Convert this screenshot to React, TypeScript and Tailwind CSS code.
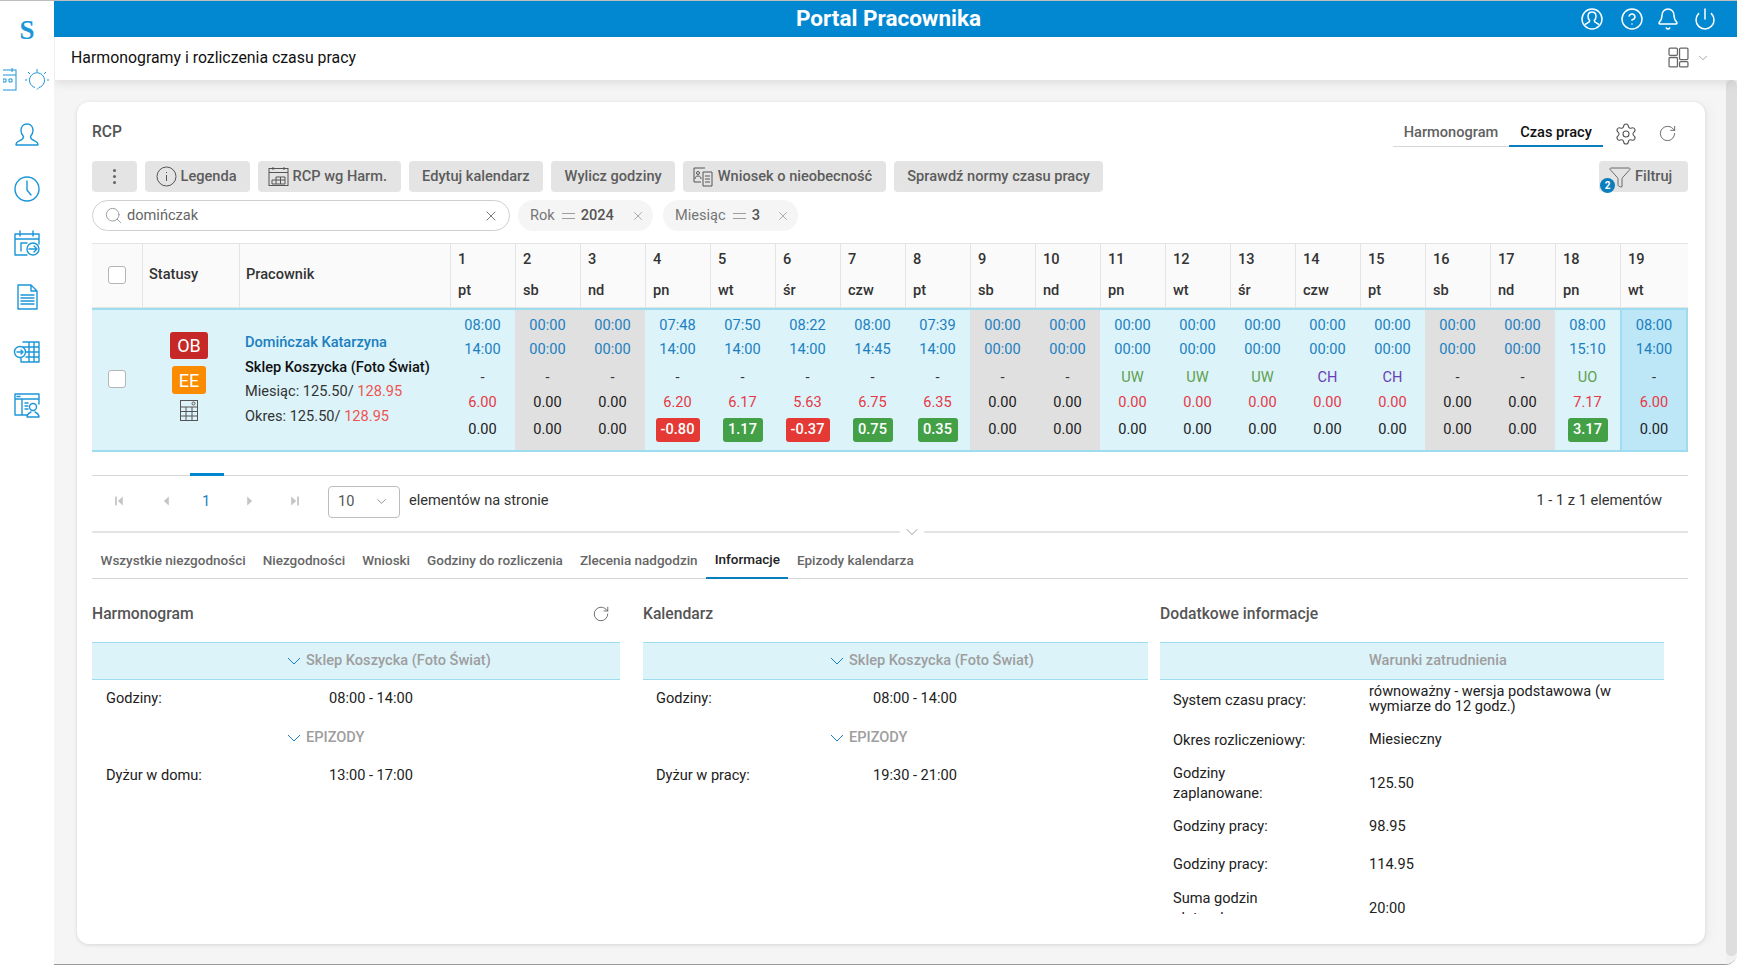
import { Bell, ChevronDown, CircleHelp, Filter, Power, RotateCw, Search, Settings, X } from "lucide-react";

const days = [
  { n: 1, d: "pt", a: "08:00", b: "14:00", c: "-", v: "6.00", r: "0.00", late: true },
  { n: 2, d: "sb", a: "00:00", b: "00:00", c: "-", v: "0.00", r: "0.00", off: true },
  { n: 3, d: "nd", a: "00:00", b: "00:00", c: "-", v: "0.00", r: "0.00", off: true },
  { n: 4, d: "pn", a: "07:48", b: "14:00", c: "-", v: "6.20", r: "-0.80", badge: "red" },
  { n: 5, d: "wt", a: "07:50", b: "14:00", c: "-", v: "6.17", r: "1.17", badge: "green" },
  { n: 6, d: "śr", a: "08:22", b: "14:00", c: "-", v: "5.63", r: "-0.37", badge: "red" },
  { n: 7, d: "czw", a: "08:00", b: "14:45", c: "-", v: "6.75", r: "0.75", badge: "green" },
  { n: 8, d: "pt", a: "07:39", b: "14:00", c: "-", v: "6.35", r: "0.35", badge: "green" },
  { n: 9, d: "sb", a: "00:00", b: "00:00", c: "-", v: "0.00", r: "0.00", off: true },
  { n: 10, d: "nd", a: "00:00", b: "00:00", c: "-", v: "0.00", r: "0.00", off: true },
  { n: 11, d: "pn", a: "00:00", b: "00:00", c: "UW", v: "0.00", r: "0.00" },
  { n: 12, d: "wt", a: "00:00", b: "00:00", c: "UW", v: "0.00", r: "0.00" },
  { n: 13, d: "śr", a: "00:00", b: "00:00", c: "UW", v: "0.00", r: "0.00" },
  { n: 14, d: "czw", a: "00:00", b: "00:00", c: "CH", v: "0.00", r: "0.00" },
  { n: 15, d: "pt", a: "00:00", b: "00:00", c: "CH", v: "0.00", r: "0.00" },
  { n: 16, d: "sb", a: "00:00", b: "00:00", c: "-", v: "0.00", r: "0.00", off: true },
  { n: 17, d: "nd", a: "00:00", b: "00:00", c: "-", v: "0.00", r: "0.00", off: true },
  { n: 18, d: "pn", a: "08:00", b: "15:10", c: "UO", v: "7.17", r: "3.17", badge: "green" },
  { n: 19, d: "wt", a: "08:00", b: "14:00", c: "-", v: "6.00", r: "0.00", selected: true },
];

const tabs = ["Wszystkie niezgodności", "Niezgodności", "Wnioski", "Godziny do rozliczenia", "Zlecenia nadgodzin", "Informacje", "Epizody kalendarza"];

function Checkbox() {
  return <span className="block w-[18px] h-[18px] rounded-[3px] border border-[#b5b5b5] bg-white" />;
}

function SideIcon({ children }: { children: React.ReactNode }) {
  return (
    <svg width="28" height="28" viewBox="0 0 28 28" fill="none" stroke="#1b96d8" strokeWidth="1.4" strokeLinejoin="round" strokeLinecap="round">
      {children}
    </svg>
  );
}

function SmallBtn({ children }: { children: React.ReactNode }) {
  return (
    <button className="h-[31px] px-[13.500px] flex items-center gap-[4px] rounded-[4px] bg-[#e4e4e4] font-medium text-[#5c5c5c] whitespace-nowrap">
      {children}
    </button>
  );
}

function PagerIcon({ dir, bar }: { dir: "l" | "r"; bar?: boolean }) {
  return (
    <svg width="11" height="12" viewBox="0 0 10 10" fill="#c4c4c4">
      {dir === "l" ? <path d="M8 1v8L3.500 5z" /> : <path d="M2 1v8l4.500-4z" />}
      {bar && (dir === "l" ? <rect x="1" y="1" width="1.600" height="8" /> : <rect x="7.400" y="1" width="1.600" height="8" />)}
    </svg>
  );
}

function Chev() {
  return (
    <svg width="14" height="8" viewBox="0 0 14 8" fill="none" stroke="#1b7fc0" strokeWidth="1">
      <path d="M1 1l6 6 6-6" />
    </svg>
  );
}

function Eq() {
  return <span className="ml-[7px] mr-[6px] w-[13px] h-[6px] border-y border-[#9e9e9e]" />;
}

function Bar({ title, pad, chevron = true }: { title: string; pad: string; chevron?: boolean }) {
  return (
    <div className={"h-[38px] flex items-center gap-[5px] border-y border-[#9edcf0] bg-[#dcf3fa] font-medium text-[#9e9e9e] " + pad}>
      {chevron && <Chev />}
      {title}
    </div>
  );
}

function Epizody({ pad }: { pad: string }) {
  return (
    <div className={"h-[38px] flex items-center gap-[5px] font-medium text-[#9e9e9e] mt-[2px] " + pad}>
      <Chev />
      EPIZODY
    </div>
  );
}

function InfoRow({ label, value, h, labelPad = "" }: { label: React.ReactNode; value: React.ReactNode; h: string; labelPad?: string }) {
  return (
    <div className={"flex items-center shrink-0 pl-[13px] " + h}>
      <div className={"w-[196px] pr-[60px] leading-[20px] " + labelPad}>{label}</div>
      <div className="flex-1 leading-[15px] pr-[40px]">{value}</div>
    </div>
  );
}

export default function App() {
  return (
    <div className="h-screen w-screen overflow-hidden flex bg-white border-t border-[#bdbdbd] font-['Roboto',sans-serif] text-[14.6px] text-[#212121]">
      {/* sidebar */}
      <aside className="w-[54px] shrink-0 flex flex-col items-center bg-white">
        <div className="h-[59px] flex items-center font-['Liberation_Serif',serif] font-bold text-[27px] text-[#1b96d8]">S</div>
        <div className="w-full h-[40px] flex items-center text-[#1b96d8]">
          <div className="ml-[3px] w-[14px] h-[26px] overflow-hidden flex justify-end shrink-0">
            <svg className="shrink-0" width="20" height="26" viewBox="0 0 20 26" fill="none" stroke="currentColor" strokeWidth="1">
              <rect x="1" y="3" width="18" height="20" />
              <path d="M1 8h18M5 1v4M15 1v4" />
              <path d="M6 12h3v3H6zM12 12h3v3h-3z" />
            </svg>
          </div>
          <svg className="ml-[7px] shrink-0" width="26" height="26" viewBox="0 0 26 26" fill="none" stroke="currentColor" strokeWidth="1">
            <path d="M11 20.500a7.500 7.500 0 1 1 4 0l-2 2" />
            <path d="M13 2v3M4 5l2 2M22 5l-2 2M1 13h2M23 13h2" />
          </svg>
        </div>
        <div className="flex flex-col items-center gap-[26px] mt-[21px]">
          <SideIcon>
            <path d="M14 3c-4 0-6 3-6 6.500 0 2.500 1 4.500 2.500 6 0 2-1 3-3.500 4-2 .8-4 1.500-4 4.500h22c0-3-2-3.700-4-4.500-2.500-1-3.500-2-3.500-4 1.500-1.500 2.500-3.500 2.500-6C20 6 18 3 14 3z" />
          </SideIcon>
          <SideIcon>
            <circle cx="14" cy="14" r="12" />
            <path d="M14 6v9l4 5" />
          </SideIcon>
          <SideIcon>
            <path d="M26 15V5H2v21h12M2 10h24M7 2v5M20 2v5M8 22v-8h6" />
            <circle cx="20" cy="20" r="6" />
            <path d="M16 20h8M21 17l3 3-3 3" />
          </SideIcon>
          <SideIcon>
            <path d="M5 2h13l6 6v18H5zM18 2v6h6M8 12h13M8 15h13M8 18h13M8 21h13" />
          </SideIcon>
          <SideIcon>
            <path d="M10 5h16v20H8v-4M10 10h16M13 15h13M13 20h13M16 5v20M21 5v20" />
            <circle cx="7" cy="15" r="5.500" />
            <path d="M4 15h6M8 13l2 2-2 2" />
          </SideIcon>
          <SideIcon>
            <path d="M14 24H2V3h24v10M2 8h24M9 8v16M4 5.500h3M12 12h3M12 15h3M12 18h3" />
            <circle cx="20" cy="16" r="3.500" />
            <path d="M14 26c0-3 2-4 4-5M26 26c0-3-2-4-4-5M14 26h12" />
          </SideIcon>
        </div>
      </aside>

      <div className="flex-1 min-w-0 flex flex-col border-b border-[#9a9a9a] rounded-br-[12px] overflow-hidden">
        {/* top bar */}
        <header className="h-[36px] shrink-0 flex items-center bg-[#0288d1] text-white">
          <div className="flex-1 pl-[143px] text-center text-[22.500px] font-bold">Portal Pracownika</div>
          <div className="flex items-center gap-[14px] pr-[20px]">
            <svg width="24" height="24" viewBox="0 0 24 24" fill="none" stroke="currentColor" strokeWidth="1.500">
              <circle cx="12" cy="12" r="10" />
              <path d="M12 5c-2.500 0-4 2-4 4.500 0 1.500.7 3 1.700 4 0 1.500-1 2-2.500 2.600L5 17.500M12 5c2.500 0 4 2 4 4.500 0 1.500-.7 3-1.700 4 0 1.500 1 2 2.500 2.600l2.200 1.400" />
            </svg>
            <CircleHelp size={24} strokeWidth={1.5} className="ml-[2px]" />
            <Bell size={24} strokeWidth={1.5} className="ml-[-2px]" />
            <Power size={24} strokeWidth={1.5} className="ml-[-1px]" />
          </div>
        </header>

        {/* page title */}
        <div className="h-[43px] pb-[2px] shrink-0 flex items-center justify-between pl-[16px] pr-[27px] bg-white border-l border-[#eeeeee] shadow-[0_3px_10px_rgba(0,0,0,0.1)] relative">
          <span className="text-[15.850px] text-[#111111]">Harmonogramy i rozliczenia czasu pracy</span>
          <div className="flex items-center gap-[7px] text-[#666666]">
            <svg width="21" height="21" viewBox="0 0 20 20" fill="none" stroke="currentColor" strokeWidth="1.200">
              <rect x="1" y="1" width="8" height="7" rx="1" />
              <rect x="1" y="10" width="8" height="9" rx="1" />
              <rect x="11" y="1" width="8" height="11" rx="1" />
              <rect x="11" y="14" width="8" height="5" rx="1" />
            </svg>
            <ChevronDown size={14} strokeWidth={1} />
          </div>
        </div>

        <div className="flex-1 min-h-0 flex bg-[#f5f5f5]">
          <div className="flex-1 min-w-0 pl-[23px] pr-[21px] pt-[22px] pb-[20px]">
            <main className="h-full flex flex-col rounded-[12px] bg-white pl-[15px] pr-[17px] shadow-[0_1px_4px_rgba(0,0,0,0.12),8px_0_8px_rgba(0,0,0,0.02)]">
              {/* title row */}
              <div className="h-[45px] shrink-0 pt-[18px] flex items-end justify-between">
                <span className="self-center pb-[2px] text-[15.600px] font-medium text-[#555555]">RCP</span>
                <div className="flex items-center">
                  <div className="flex h-[27px] font-medium">
                    <span className="w-[116px] pt-[2px] text-center border-b border-[#d8d8d8] text-[#616161]">Harmonogram</span>
                    <span className="w-[94px] pt-[2px] text-center border-b-2 border-[#0a7ebd] text-[#111111]">Czas pracy</span>
                  </div>
                  <Settings size={24} strokeWidth={1.1} className="ml-[11px] text-[#555555]" />
                  <RotateCw size={19} strokeWidth={1.1} className="ml-[20px] mr-[11px] text-[#555555]" />
                </div>
              </div>

              {/* toolbar */}
              <div className="mt-[14px] h-[31px] shrink-0 flex items-center gap-[8px]">
                <button className="h-[31px] w-[45px] flex flex-col items-center justify-center gap-[3px] rounded-[4px] bg-[#e4e4e4]">
                  <span className="w-[3px] h-[3px] rounded-full bg-[#666666]" />
                  <span className="w-[3px] h-[3px] rounded-full bg-[#666666]" />
                  <span className="w-[3px] h-[3px] rounded-full bg-[#666666]" />
                </button>
                <SmallBtn>
                  <svg className="-ml-[3px]" width="21" height="21" viewBox="0 0 21 21" fill="none" stroke="#555555" strokeWidth="1">
                    <circle cx="10.500" cy="10.500" r="9.500" />
                    <path d="M10.500 9v6M10.500 6v1" />
                  </svg>
                  Legenda
                </SmallBtn>
                <SmallBtn>
                  <svg className="-ml-[4px]" width="21" height="21" viewBox="0 0 21 21" fill="none" stroke="#555555" strokeWidth="1">
                    <rect x="1" y="2.500" width="19" height="17" />
                    <path d="M1 6.500h19M5 1v3M16 1v3M4 14h13v4H4zM8 11h9v3M8 11v7M12.500 11v7" />
                  </svg>
                  RCP wg Harm.
                </SmallBtn>
                <SmallBtn>Edytuj kalendarz</SmallBtn>
                <SmallBtn>Wylicz godziny</SmallBtn>
                <SmallBtn>
                  <svg className="-ml-[4px]" width="21" height="21" viewBox="0 0 21 21" fill="none" stroke="#555555" strokeWidth="1">
                    <path d="M12 2H1v14h7" />
                    <circle cx="5" cy="7" r="1.500" />
                    <path d="M2 13c0-2 1-3 3-3s3 1 3 3" />
                    <path d="M10 6h9v14h-9zM12 10h5M12 13h5M12 16h5" />
                  </svg>
                  Wniosek o nieobecność
                </SmallBtn>
                <SmallBtn>Sprawdź normy czasu pracy</SmallBtn>
                <div className="ml-auto relative">
                  <button className="h-[31px] w-[89px] pl-[9px] flex items-center gap-[3px] rounded-[4px] bg-[#e4e4e4] font-medium text-[#5c5c5c]">
                    <Filter size={24} strokeWidth={0.9} />
                    Filtruj
                  </button>
                  <span className="absolute left-[1px] bottom-0 translate-y-[1px] w-[15px] h-[15px] rounded-full bg-[#0a7ebd] text-white text-[10px] font-bold flex items-center justify-center">2</span>
                </div>
              </div>

              {/* filters */}
              <div className="mt-[8px] h-[31px] shrink-0 flex items-center gap-[8px]">
                <div className="w-[418px] h-[31px] flex items-center pl-[11px] pr-[10px] gap-[4px] rounded-full border border-[#cfcfcf] text-[#666666]">
                  <Search size={19} strokeWidth={1} className="text-[#888888]" />
                  <span className="flex-1">domińczak</span>
                  <X size={16} strokeWidth={1.2} className="text-[#555555]" />
                </div>
                <div className="w-[135px] h-[31px] flex items-center pl-[12px] rounded-full bg-[#f5f5f5] text-[#757575]">
                  Rok
                  <Eq />
                  <span className="font-medium text-[#555555]">2024</span>
                  <X size={14} strokeWidth={1} className="ml-auto mr-[8px]" />
                </div>
                <div className="ml-[2px] w-[135px] h-[31px] flex items-center pl-[12px] rounded-full bg-[#f5f5f5] text-[#757575]">
                  Miesiąc
                  <Eq />
                  <span className="font-medium text-[#555555]">3</span>
                  <X size={14} strokeWidth={1} className="ml-auto mr-[8px]" />
                </div>
              </div>

              {/* table */}
              <div className="mt-[12px] shrink-0 grid grid-cols-[50px_97px_211px_repeat(18,65px)_minmax(0,1fr)]">
                <div className="h-[65px] pb-[2px] flex items-center justify-center bg-[#fafafa] border-y border-[#e4e4e4]"><Checkbox /></div>
                <div className="h-[65px] pb-[2px] flex items-center pl-[6px] bg-[#fafafa] border-y border-l border-[#e4e4e4] font-medium text-[#333333]">Statusy</div>
                <div className="h-[65px] pb-[2px] flex items-center pl-[6px] bg-[#fafafa] border-y border-l border-[#e4e4e4] font-medium text-[#333333]">Pracownik</div>
                {days.map((d) => (
                  <div key={d.n} className="h-[65px] flex flex-col justify-around pl-[7px] py-[1px] bg-[#fafafa] border-y border-l border-[#e4e4e4] font-medium text-[#333333]">
                    <span>{d.n}</span>
                    <span>{d.d}</span>
                  </div>
                ))}

                <div className="h-[144px] pb-[2px] flex items-center justify-center bg-[#dcf3fa] border-y-2 border-[#9edcf0]"><Checkbox /></div>
                <div className="h-[144px] flex flex-col items-center pt-[22px] pr-[3px] bg-[#dcf3fa] border-y-2 border-[#9edcf0]">
                  <span className="w-[38px] h-[27px] flex items-center justify-center rounded-[3px] bg-[#c62828] text-white text-[18px]">OB</span>
                  <span className="mt-[7px] w-[34px] h-[28px] flex items-center justify-center rounded-[3px] bg-[#fb8c00] text-white text-[18px]">EE</span>
                  <svg className="mt-[6px]" width="18" height="21" viewBox="0 0 18 21" fill="none" stroke="#555555" strokeWidth="1">
                    <rect x="0.500" y="0.500" width="17" height="20" />
                    <path d="M0.500 7h17M0.500 11.500h17M0.500 16h17M6 7v14M12 7v14" />
                    <circle cx="13.500" cy="3.500" r="1.500" />
                  </svg>
                </div>
                <div className="h-[144px] flex flex-col pt-[20px] pl-[6px] bg-[#dcf3fa] border-y-2 border-[#9edcf0] leading-[24.500px] whitespace-nowrap">
                  <span className="font-medium text-[#1b7fc0]">Domińczak Katarzyna</span>
                  <span className="font-medium text-[#111111]">Sklep Koszycka (Foto Świat)</span>
                  <span className="text-[#333333]">Miesiąc: 125.50/ <span className="text-[#ef5350]">128.95</span></span>
                  <span className="text-[#333333]">Okres: 125.50/ <span className="text-[#ef5350]">128.95</span></span>
                </div>
                {days.map((d) => {
                  const bg = d.off ? "bg-[#e0e0e0]" : d.selected ? "bg-[#bde6f6] border-x-2" : "bg-[#dcf3fa]";
                  const code = d.c === "CH" ? "text-[#6a3fb5]" : d.c === "-" ? "text-[#333333]" : "text-[#5fa04e]";
                  const val = d.off ? "text-[#212121]" : "text-[#e53945]";
                  return (
                    <div key={d.n} className={"h-[144px] flex flex-col items-center pt-[4px] border-y-2 border-[#9edcf0] " + bg}>
                      <span className="h-[24px] flex items-center text-[#1b7fc0]">{d.a}</span>
                      <span className="h-[23px] flex items-center text-[#1b7fc0]">{d.b}</span>
                      <span className={"h-[33px] flex items-center " + code}>{d.c}</span>
                      <span className={"h-[18px] flex items-center " + val}>{d.v}</span>
                      <span className="h-[35px] flex items-center">
                        {d.badge ? (
                          <span className={"h-[24px] flex items-center justify-center rounded-[3px] text-white font-medium " + (d.badge === "red" ? "w-[44px] bg-[#e53935]" : "w-[40px] bg-[#43a047]")}>{d.r}</span>
                        ) : (
                          <span className="text-[#212121]">{d.r}</span>
                        )}
                      </span>
                    </div>
                  );
                })}
              </div>

              {/* pagination */}
              <div className="mt-[23px] h-[56px] pb-[4px] shrink-0 flex items-center border-t border-[#d8d8d8] text-[#333333]">
                <div className="w-[236px] flex items-center relative">
                  <span className="ml-[22px] flex"><PagerIcon dir="l" bar /></span>
                  <span className="ml-[35px] flex"><PagerIcon dir="l" /></span>
                  <span className="ml-[31px] w-[9px] text-[#1b7fc0]">1</span>
                  <span className="absolute left-[98px] top-[-18px] w-[34px] h-[3px] bg-[#0288d1]" />
                  <span className="ml-[34px] flex"><PagerIcon dir="r" /></span>
                  <span className="ml-[33px] flex"><PagerIcon dir="r" bar /></span>
                </div>
                <div className="w-[72px] h-[32px] flex items-center justify-between pl-[9px] pr-[10px] rounded-[4px] border border-[#bdbdbd] text-[#555555]">
                  10
                  <ChevronDown size={15} strokeWidth={1} />
                </div>
                <span className="ml-[9px] flex-1 -mt-[1px]">elementów na stronie</span>
                <span className="pr-[26px] -mt-[1px]">1 - 1 z 1 elementów</span>
              </div>

              {/* divider */}
              <div className="h-[2px] shrink-0 flex items-center">
                <div className="flex-1 h-[2px] bg-[#e4e4e4]" />
                <ChevronDown size={20} strokeWidth={1} className="mx-[2px] text-[#888888]" />
                <div className="w-[764px] h-[2px] bg-[#e4e4e4]" />
              </div>

              {/* tabs */}
              <div className="h-[46px] shrink-0 flex items-stretch border-b border-[#d8d8d8] font-medium text-[13.500px] text-[#666666] whitespace-nowrap">
                {tabs.map((t) => (
                  <span key={t} className={"px-[8.500px] flex items-center pt-[8px] -mb-px " + (t === "Informacje" ? "border-b-2 border-[#0a7ebd] text-[#222222]" : "")}>{t}</span>
                ))}
              </div>

              {/* details */}
              <div className="flex-1 min-h-0 flex">
                <section className="w-[528px] shrink-0 flex flex-col">
                  <div className="h-[63px] pt-[7px] flex items-center justify-between font-medium text-[15.700px] text-[#555555]">
                    Harmonogram
                    <RotateCw size={18} strokeWidth={1} className="mr-[10px] text-[#444444]" />
                  </div>
                  <Bar title="Sklep Koszycka (Foto Świat)" pad="pl-[195px]" />
                  <div className="h-[37px] pt-[1px] flex items-center pl-[14px]"><span className="w-[223px]">Godziny:</span>08:00 - 14:00</div>
                  <Epizody pad="pl-[195px]" />
                  <div className="h-[38px] flex items-center pl-[14px]"><span className="w-[223px]">Dyżur w domu:</span>13:00 - 17:00</div>
                </section>
                <section className="ml-[23px] w-[505px] shrink-0 flex flex-col">
                  <div className="h-[63px] pt-[7px] flex items-center font-medium text-[15.700px] text-[#555555]">Kalendarz</div>
                  <Bar title="Sklep Koszycka (Foto Świat)" pad="pl-[187px]" />
                  <div className="h-[37px] pt-[1px] flex items-center pl-[13px]"><span className="w-[217px]">Godziny:</span>08:00 - 14:00</div>
                  <Epizody pad="pl-[187px]" />
                  <div className="h-[38px] flex items-center pl-[13px]"><span className="w-[217px]">Dyżur w pracy:</span>19:30 - 21:00</div>
                </section>
                <section className="ml-[12px] w-[504px] shrink-0 flex flex-col">
                  <div className="h-[63px] pt-[7px] flex items-center font-medium text-[15.700px] text-[#555555]">Dodatkowe informacje</div>
                  <Bar title="Warunki zatrudnienia" pad="pl-[209px]" chevron={false} />
                  <div className="h-[234px] overflow-hidden flex flex-col">
                    <InfoRow h="h-[38px]" labelPad="pt-[2px]" label="System czasu pracy:" value="równoważny - wersja podstawowa (w wymiarze do 12 godz.)" />
                    <InfoRow h="h-[42px] pt-[1px]" label="Okres rozliczeniowy:" value="Miesieczny" />
                    <InfoRow h="h-[46px]" label="Godziny zaplanowane:" value="125.50" />
                    <InfoRow h="h-[40px]" label="Godziny pracy:" value="98.95" />
                    <InfoRow h="h-[36px]" label="Godziny pracy:" value="114.95" />
                    <InfoRow h="h-[52px]" label="Suma godzin płatnych:" value="20:00" />
                  </div>
                </section>
              </div>
            </main>
          </div>
          {/* scrollbar */}
          <div className="w-[11px] shrink-0 bg-[#f1f1f1] pb-[8px]">
            <div className="h-full rounded-full bg-[#dedede]" />
          </div>
        </div>
      </div>
    </div>
  );
}
